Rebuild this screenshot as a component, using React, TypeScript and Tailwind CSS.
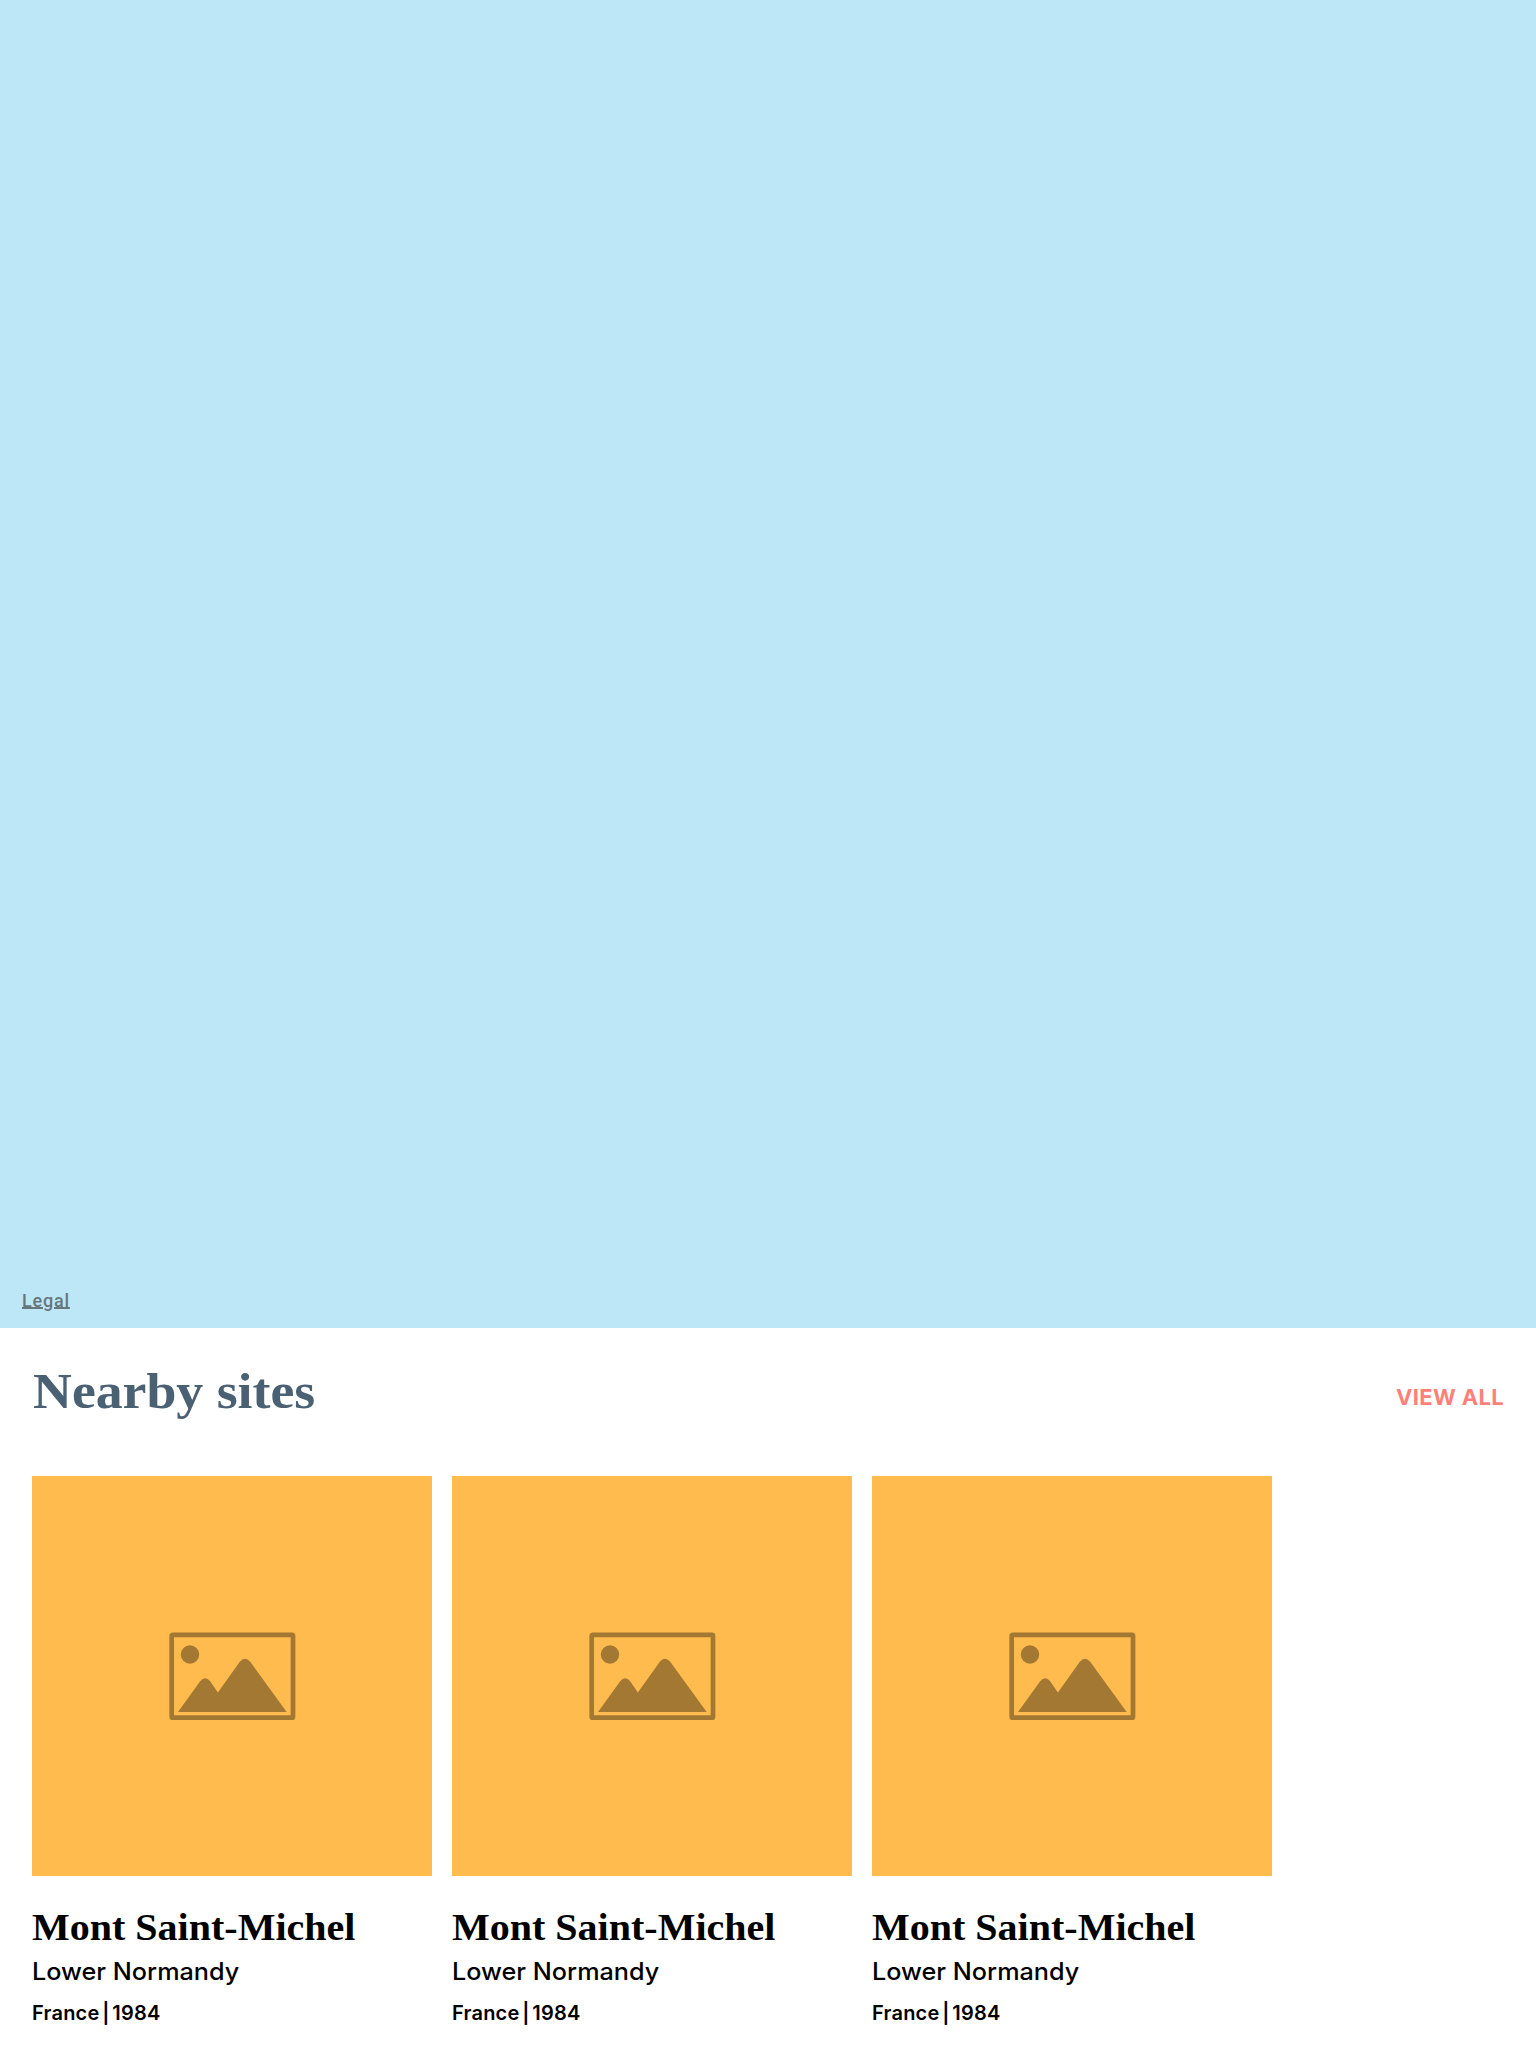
const sites = [
  { id: 1, name: "Mont Saint-Michel", region: "Lower Normandy", country: "France", year: 1984 },
  { id: 2, name: "Mont Saint-Michel", region: "Lower Normandy", country: "France", year: 1984 },
  { id: 3, name: "Mont Saint-Michel", region: "Lower Normandy", country: "France", year: 1984 },
];

function PictureIcon() {
  return (
    <svg width="128" height="90" viewBox="0 0 128 90" fill="#a27832" aria-hidden="true">
      <rect x="3.7" y="3.9" width="121.3" height="82.8" rx="1" fill="none" stroke="#a27832" strokeWidth="4.7" />
      <circle cx="22" cy="23.5" r="9.2" />
      <path d="M10 81 L32 50.5 Q37 44.5 42 50 L49.9 61.4 L71.8 30.8 Q77 24.6 82.2 30.8 L118.7 81 Z" />
    </svg>
  );
}

function SiteCard({ site }: { site: (typeof sites)[number] }) {
  return (
    <article className="w-[400px] text-black">
      <div className="flex h-[400px] items-center justify-center bg-[#ffbb4d]">
        <PictureIcon />
      </div>
      <h3 className="mt-[29px] origin-left scale-x-[1.053] whitespace-nowrap font-['Liberation_Serif',serif] text-[38px] font-bold leading-[44px]">
        {site.name}
      </h3>
      <p className="mt-[8px] origin-left scale-x-[1.05] whitespace-nowrap font-['Inter',sans-serif] text-[24px] font-medium leading-[30px]">
        {site.region}
      </p>
      <p className="mt-[14px] whitespace-nowrap font-['Inter',sans-serif] text-[20px] font-semibold leading-[24px] tracking-[0.2px] [word-spacing:-2.5px]">
        {site.country} | {site.year}
      </p>
    </article>
  );
}

export default function App() {
  return (
    <main className="flex h-[2048px] w-[1536px] flex-col overflow-hidden bg-white">
      <section className="flex h-[1328px] shrink-0 items-end bg-[#bde7f7] pb-[15px] pl-[22px]">
        <a className="font-['Roboto',sans-serif] text-[18px] font-medium leading-[24px] tracking-[0.8px] text-[#66777e] underline decoration-2 underline-offset-0">
          Legal
        </a>
      </section>
      <section className="px-8">
        <header className="flex h-[148px] items-start justify-between pt-[33px]">
          <h2 className="origin-left scale-x-[1.075] whitespace-nowrap pl-px font-['Liberation_Serif',serif] text-[50px] font-bold leading-[60px] text-[#4a6073]">
            Nearby sites
          </h2>
          <a className="mt-[22px] whitespace-nowrap font-['Inter',sans-serif] text-[22px] font-bold leading-[28px] tracking-[0.35px] text-[#ff7f7a]">
            VIEW ALL
          </a>
        </header>
        <div className="flex gap-5">
          {sites.map((site) => (
            <SiteCard key={site.id} site={site} />
          ))}
        </div>
      </section>
    </main>
  );
}
